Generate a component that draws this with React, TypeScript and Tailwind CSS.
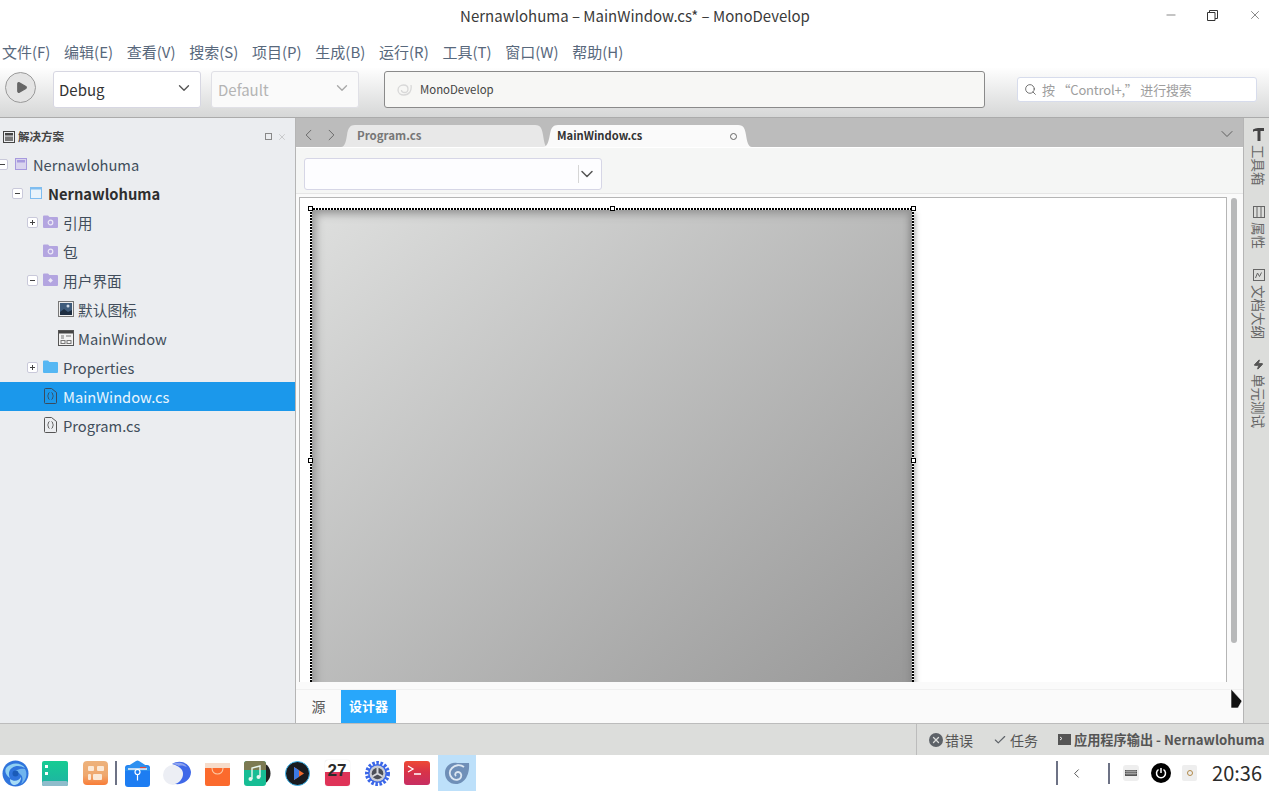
import React from "react";
import { ChevronDown, ChevronLeft, ChevronRight, Search, Minus, X, Check, Play, Zap } from "lucide-react";

const menus = ["文件(F)", "编辑(E)", "查看(V)", "搜索(S)", "项目(P)", "生成(B)", "运行(R)", "工具(T)", "窗口(W)", "帮助(H)"];

function Expander({ open }: { open: boolean }) {
  return (
    <span className="w-[11px] h-[11px] bg-white border border-[#c9c9da] rounded-[2px] flex items-center justify-center shrink-0">
      <svg width="7" height="7" viewBox="0 0 7 7"><path d={open ? "M1 3.5h5" : "M1 3.5h5M3.5 1v5"} stroke="#444" strokeWidth="1" /></svg>
    </span>
  );
}

function Folder({ dot, color = "#b3a5e0" }: { dot?: "o" | "d"; color?: string }) {
  return (
    <svg width="15" height="13" viewBox="0 0 15 13" className="shrink-0 -mt-[2px]">
      <path d="M0 1.5A1 1 0 0 1 1 .5h4l1.5 1.5H14a1 1 0 0 1 1 1V12a1 1 0 0 1-1 1H1a1 1 0 0 1-1-1z" fill={color} />
      {dot === "o" && <circle cx="7.5" cy="7.5" r="2.3" fill="none" stroke="#ebe8f7" strokeWidth="1.2" />}
      {dot === "d" && <path d="M7.5 5l2.4 2.4-2.4 2.4-2.4-2.4z" fill="#ebe8f7" />}
    </svg>
  );
}

function CsFile({ light }: { light?: boolean }) {
  const c = light ? "#3b4a5c" : "#555";
  return (
    <svg width="13" height="16" viewBox="0 0 13 16" className="shrink-0 -mt-[2px]">
      <path d="M.5 1.5a1 1 0 0 1 1-1h6l5 4v10a1 1 0 0 1-1 1h-10a1 1 0 0 1-1-1z" fill="none" stroke={c} />
      <path d="M5.500 4.500c-1.500 0-.8 3-2 3.500 1.200.5.5 3.500 2 3.500M7.500 4.500c1.500 0 .8 3 2 3.500-1.200.5-.5 3.500-2 3.500" fill="none" stroke={c} strokeWidth=".9" />
    </svg>
  );
}

function Row({ indent, exp, icon, label, bold, selected }: { indent: number; exp?: boolean; icon: React.ReactNode; label: string; bold?: boolean; selected?: boolean }) {
  return (
    <div className={`h-[29px] flex items-center shrink-0 ${selected ? "bg-[#1b98eb] text-[#e8f5fe]" : "text-[#414d5b]"}`}>
      <div className="shrink-0 flex justify-end" style={{ width: indent }}>{exp !== undefined && <Expander open={exp} />}</div>
      <div className="w-[25px] flex justify-center shrink-0">{icon}</div>
      <span className={`text-[14.700px] leading-none pt-[2px] ${bold ? "font-bold text-[#2e2e2e]" : ""}`}>{label}</span>
    </div>
  );
}

function SideTab({ icon, label }: { icon: React.ReactNode; label: string }) {
  return (
    <div className="flex flex-col items-center gap-[4px]">
      {icon}
      <span className="[writing-mode:vertical-rl] [text-orientation:sideways] text-[13.500px] leading-none text-[#666]">{label}</span>
    </div>
  );
}

function Handle({ className }: { className: string }) {
  return <span className={`absolute w-[5px] h-[5px] bg-white border border-black ${className}`} />;
}

function DockIcons() {
  return (
    <div className="flex items-center h-full -ml-[5px]">
      <div className="w-[40px] flex justify-center">
        <svg width="27" height="27" viewBox="0 0 27 27">
          <circle cx="13.500" cy="13.500" r="13" fill="#2f74dc" />
          <path d="M4 8c5-6 15-6 19 0-4-2-9-3-13 0-3 2-4 6-2 10-3-2-6-6-4-10z" fill="#8fd0f3" />
          <path d="M23 9c3 5 1 12-4 15 2-3 2-7 0-9-2-3-5-3-8-2 2-3 8-5 12-4z" fill="#6fb4ee" />
          <path d="M8 19c4 3 9 2 11-2 0 4-2 7-6 8-3 0-5-2-5-6z" fill="#a8dcf6" />
          <circle cx="13.500" cy="13.500" r="3" fill="#1a5bb8" />
        </svg>
      </div>
      <div className="w-[40px] flex justify-center">
        <svg width="26" height="25" viewBox="0 0 26 25">
          <defs><linearGradient id="gf" x1="0" y1="0" x2="0" y2="1"><stop offset="0" stopColor="#16cc92" /><stop offset="1" stopColor="#1fb2a4" /></linearGradient></defs>
          <rect width="26" height="25" rx="2" fill="url(#gf)" />
          <rect y="20" width="26" height="5" rx="2" fill="#8fbccb" />
          <rect x="3" y="4" width="3" height="3" fill="#fff" />
          <rect x="3" y="11" width="3" height="3" fill="#fff" />
        </svg>
      </div>
      <div className="w-[40px] flex justify-center">
        <svg width="25" height="24" viewBox="0 0 25 24">
          <defs><linearGradient id="ga" x1="0" y1="0" x2="0" y2="1"><stop offset="0" stopColor="#edb27c" /><stop offset=".6" stopColor="#efa86e" /><stop offset="1" stopColor="#f97c36" /></linearGradient></defs>
          <rect width="25" height="24" rx="4" fill="url(#ga)" />
          <rect x="5" y="5" width="6" height="5" rx="1" fill="#fbe9d7" />
          <rect x="14" y="5" width="7" height="5" rx="1" fill="#fbe9d7" />
          <rect x="5" y="13" width="3" height="6" rx="1" fill="#fbe9d7" />
          <rect x="10" y="13" width="9" height="6" rx="1" fill="#fbe9d7" />
        </svg>
      </div>
      <div className="w-[2px] h-[24px] bg-[#6d7285]" />
      <div className="w-[40px] flex justify-center">
        <svg width="25" height="27" viewBox="0 0 25 27">
          <rect y="5" width="25" height="22" rx="3" fill="#1d7df2" />
          <path d="M0 8L11 1q1.500-1 3 0l11 7v3H0z" fill="#2b8ff0" />
          <path d="M3 9h19" stroke="#f3f5f8" strokeWidth="1.500" />
          <path d="M15 7.500h6" stroke="#e0483d" strokeWidth="1.200" />
          <circle cx="12.500" cy="12" r="2.500" fill="none" stroke="#fff" strokeWidth="1.200" />
          <path d="M12.500 14.500v6" stroke="#fff" strokeWidth="1.200" />
        </svg>
      </div>
      <div className="w-[40px] flex justify-center">
        <svg width="28" height="24" viewBox="0 0 28 24">
          <circle cx="10" cy="14" r="10" fill="#eceef4" />
          <path d="M9 3c8-5 18-1 19 8 0 8-8 13-16 12 4-1 8-5 8-10S16 5 9 3z" fill="#3f68e8" />
          <path d="M9 3c5-2 12-2 15 3-3-1-6-2-8-1-2-1-4-2-7-2z" fill="#8ea3ee" />
        </svg>
      </div>
      <div className="w-[40px] flex justify-center">
        <svg width="25" height="25" viewBox="0 0 25 25">
          <path d="M0 3h25v20a2 2 0 0 1-2 2H2a2 2 0 0 1-2-2z" fill="#fb6a2d" />
          <path d="M0 2h25v5H0z" fill="#f6dccb" />
          <path d="M7 7c0 8 11 8 11 0" fill="none" stroke="#fbc9a5" strokeWidth="1.100" />
        </svg>
      </div>
      <div className="w-[40px] flex justify-center">
        <svg width="27" height="25" viewBox="0 0 27 25">
          <circle cx="15" cy="12.500" r="11.500" fill="#222" />
          <rect width="22" height="25" rx="3" fill="#16bd94" />
          <path d="M0 3a3 3 0 0 1 3-3h16a3 3 0 0 1 3 3v6H0z" fill="#7c7a52" />
          <path d="M8 18V7l8-2v11" fill="none" stroke="#e8f6ef" strokeWidth="1.400" />
          <circle cx="6.500" cy="18" r="2" fill="#e8f6ef" />
          <circle cx="14.500" cy="16" r="2" fill="#e8f6ef" />
        </svg>
      </div>
      <div className="w-[40px] flex justify-center">
        <svg width="25" height="25" viewBox="0 0 25 25">
          <circle cx="12.500" cy="12.500" r="12" fill="#191b20" stroke="#3fb6ee" strokeWidth="1" />
          <path d="M9 6l10 6.500L9 19z" fill="#f0692d" />
          <path d="M9 6l5 3.300v6.400L9 19z" fill="#3b79e6" />
        </svg>
      </div>
      <div className="w-[40px] flex justify-center">
        <div className="w-[25px] h-[26px] rounded-[3px] bg-white shadow-[0_0_1px_#ccc] flex flex-col overflow-hidden relative">
          <div className="h-[12px]" />
          <div className="flex-1 bg-[#df3358]" />
          <span className="absolute inset-0 flex items-center justify-center pb-[5px] text-[17px] font-bold text-[#2b2b2b] font-['Liberation_Sans',sans-serif]">27</span>
        </div>
      </div>
      <div className="w-[40px] flex justify-center">
        <svg width="25" height="25" viewBox="0 0 25 25">
          <circle cx="12.500" cy="12.500" r="10.500" fill="none" stroke="#3a66e8" strokeWidth="4" strokeDasharray="2.500 1.500" />
          <circle cx="12.500" cy="12.500" r="9.500" fill="#3a66e8" />
          <circle cx="12.500" cy="12.500" r="8" fill="#c9ccd4" />
          <circle cx="12.500" cy="12.500" r="5.800" fill="#4b4f58" />
          <path d="M12.500 12.500V6.500M12.500 12.500l-5.200 3M12.500 12.500l5.200 3" stroke="#d5d7dc" strokeWidth="2" />
        </svg>
      </div>
      <div className="w-[40px] flex justify-center">
        <svg width="26" height="24" viewBox="0 0 26 24">
          <defs><linearGradient id="gt" x1="0" y1="0" x2="0" y2="1"><stop offset="0" stopColor="#ee4a35" /><stop offset=".45" stopColor="#d83348" /><stop offset="1" stopColor="#c72e63" /></linearGradient></defs>
          <rect width="26" height="24" rx="3" fill="url(#gt)" />
          <path d="M4 5l5 3-5 3M10 13h7" fill="none" stroke="#fff" strokeWidth="1.300" />
        </svg>
      </div>
      <div className="w-[38px] ml-[1px] h-full bg-[#bde0fa] flex items-center justify-center">
        <svg width="26" height="24" viewBox="0 0 26 24">
          <path d="M25 2c1 11-4 21-13 21C5 23 1 18 1 12S6 1 13 2c4 0 8 0 12 0z" fill="#6f8fb8" />
          <path d="M20 6c-4-3-9-2-12 1S5 14 8 17s8 2 9-1-1-5-3-5-4 2-2 4" fill="none" stroke="#dde7f2" strokeWidth="1.800" />
        </svg>
      </div>
    </div>
  );
}

export default function App() {
  return (
    <div className="w-[1269px] h-[791px] overflow-hidden flex flex-col bg-white font-['Noto_Sans_CJK_SC','Noto_Sans',sans-serif] relative">
      {/* title bar */}
      <div className="h-[30px] shrink-0 flex items-center relative bg-white">
        <div className="flex-1 text-center text-[15px] leading-none text-[#3a3a3a] pl-[1px]">Nernawlohuma – MainWindow.cs* – MonoDevelop</div>
        <div className="absolute right-0 top-0 h-[30px] flex items-center">
          <div className="w-[24px] flex justify-center text-[#333]"><Minus size={14} strokeWidth={1} /></div>
          <div className="w-[58px] flex justify-center">
            <svg width="11" height="11" viewBox="0 0 11 11"><path d="M.5 2.500h7.500v8H.5zM2.500 2.500V.5h8v8H8" fill="none" stroke="#333" /></svg>
          </div>
          <div className="w-[28px] flex justify-center text-[#333]"><X size={14} strokeWidth={1} /></div>
        </div>
      </div>
      {/* menu */}
      <div className="h-[38px] shrink-0 flex items-center pl-[2px] gap-[13.700px] text-[15px] leading-none text-[#58687c] pt-[4px]">
        {menus.map((m) => <span key={m}>{m}</span>)}
      </div>
      {/* toolbar */}
      <div className="h-[50px] shrink-0 bg-gradient-to-b from-[#fefefe] to-[#d6d7d7] border-b border-b-[#ababab] flex items-start pl-[5px] pt-[3px]">
        <div className="w-[31px] h-[31px] mt-[1px] rounded-full border border-[#9a9a9a] bg-[#e4e4e4] flex items-center justify-center">
          <Play size={13} className="text-[#666] fill-[#666] ml-[1px]" />
        </div>
        <div className="w-[148px] h-[37px] ml-[17px] rounded-[3px] bg-white border border-[#d7d7e2] flex items-center justify-between pl-[5px] pr-[7px]">
          <span className="text-[15px] leading-none text-[#333]">Debug</span>
          <ChevronDown size={18} strokeWidth={1.800} className="text-[#555] -mt-[3px]" />
        </div>
        <div className="w-[148px] h-[37px] ml-[10px] rounded-[3px] bg-[#fafafa] border border-[#e0e0e6] flex items-center justify-between pl-[6px] pr-[7px]">
          <span className="text-[15px] leading-none text-[#b4b4b4]">Default</span>
          <ChevronDown size={18} strokeWidth={1.800} className="text-[#a9a9a9] -mt-[3px]" />
        </div>
        <div className="w-[601px] h-[37px] ml-[25px] rounded-[3px] bg-[#f7f7f5] border border-[#8a8a8a] flex items-center pl-[11px]">
          <svg width="16" height="12" viewBox="0 0 16 12"><path d="M15 1c1 6-2 10-7 10-3.500 0-6-2-6-5s2.500-5 5.500-5 4.500 2 4.500 4-1.500 3.500-3.500 3.500-3-1-3-2.500" fill="none" stroke="#d8d8d8" strokeWidth="1.300" /></svg>
          <span className="ml-[8px] text-[11.400px] leading-none text-[#444]">MonoDevelop</span>
        </div>
        <div className="w-[240px] h-[25px] ml-[32px] mt-[6px] rounded-[3px] bg-white border border-[#d7dcec] flex items-center pl-[6px]">
          <Search size={13} strokeWidth={1.500} className="text-[#555]" />
          <span className="ml-[5px] text-[13px] tracking-[-0.2px] leading-none text-[#9e9e9e] -mt-[1px]">按 “Control+,” 进行搜索</span>
        </div>
      </div>
      {/* main */}
      <div className="flex-1 flex min-h-0">
        {/* sidebar */}
        <div className="w-[296px] shrink-0 bg-[#ebedf0] border-r border-r-[#b5b5b5] flex flex-col">
          <div className="h-[33px] shrink-0 flex items-center pl-[3px] pr-[8px] pt-[4px]">
            <svg width="12" height="12" viewBox="0 0 12 12"><rect x=".5" y=".5" width="11" height="11" fill="none" stroke="#444" /><rect x="2" y="2" width="8" height="2.500" fill="#444" /><rect x="2" y="5.500" width="8" height="4.500" fill="#777" /></svg>
            <span className="ml-[3px] text-[11.500px] leading-none font-bold text-[#444]">解决方案</span>
            <div className="flex-1" />
            <span className="w-[7px] h-[7px] border border-[#888]" />
            <X size={10} className="ml-[5px] text-[#999]" strokeWidth={1} />
          </div>
          <div className="flex flex-col -mt-[1px]">
            <Row indent={8} exp={true} label="Nernawlohuma" icon={
              <svg width="12" height="12" viewBox="0 0 12 12" className="-mt-[2px]"><rect x=".5" y=".5" width="11" height="11" fill="#d9d4ee" stroke="#a79ade" /><rect x="2" y="2" width="8" height="2.500" fill="#a79ade" /></svg>
            } />
            <Row indent={23} exp={true} bold label="Nernawlohuma" icon={
              <svg width="12" height="12" viewBox="0 0 12 12" className="-mt-[2px]"><rect x=".5" y=".5" width="11" height="11" fill="#e8f3fb" stroke="#7fbdf0" /><rect x="1" y="1" width="10" height="1.500" fill="#7fbdf0" /></svg>
            } />
            <Row indent={38} exp={false} label="引用" icon={<Folder dot="o" />} />
            <Row indent={38} label="包" icon={<Folder dot="o" />} />
            <Row indent={38} exp={true} label="用户界面" icon={<Folder dot="d" />} />
            <Row indent={53} label="默认图标" icon={
              <svg width="16" height="16" viewBox="0 0 16 16" className="-mt-[2px]"><rect x=".5" y=".5" width="15" height="15" fill="#eee" stroke="#777" /><rect x="2" y="2" width="12" height="12" fill="#3f5c7c" /><path d="M2 11l4-3 4 3 4-2v5H2z" fill="#1c2c40" /><circle cx="10" cy="5" r="1.500" fill="#cfd9e6" /></svg>
            } />
            <Row indent={53} label="MainWindow" icon={
              <svg width="16" height="16" viewBox="0 0 16 16" className="-mt-[2px]"><rect x=".5" y=".5" width="15" height="15" fill="#f2f2f2" stroke="#555" /><rect x="1" y="1" width="14" height="2.500" fill="#444" /><path d="M3 6h3M3 8h3M8 6h5" stroke="#777" /><rect x="3" y="10.500" width="4" height="3" fill="none" stroke="#777" /><rect x="9" y="10.500" width="4" height="3" fill="none" stroke="#777" /></svg>
            } />
            <Row indent={38} exp={false} label="Properties" icon={<Folder color="#55b7f3" />} />
            <Row indent={38} selected label="MainWindow.cs" icon={<CsFile light />} />
            <Row indent={38} label="Program.cs" icon={<CsFile />} />
          </div>
        </div>
        {/* centre */}
        <div className="w-[947px] shrink-0 flex flex-col bg-[#fafafa]">
          <div className="h-[29px] shrink-0 bg-[#bcbcbc] flex items-end">
            <div className="w-[45px] h-full flex items-center pl-[3px] gap-[4px] pt-[4px] text-[#555]">
              <ChevronLeft size={20} strokeWidth={1} />
              <ChevronRight size={20} strokeWidth={1} />
            </div>
            <div className="w-[206px] h-[22px] bg-[#e8e8e8] [clip-path:path('M0_22C4_22_5_16_6_10C7_3_9_0_14_0L194_0C200_0_201_4_202_10C203_16_204_22_206_22Z')] flex items-center pl-[16px]">
              <span className="text-[11.500px] font-bold leading-none text-[#777]">Program.cs</span>
            </div>
            <div className="w-[209px] h-[22px] -ml-[4px] bg-[#fafafa] [clip-path:path('M0_22C5_22_6_14_7_9C8_3_10_0_15_0L195_0C201_0_202_4_203_10C204_16_205_22_209_22Z')] flex items-center pl-[14px] justify-between pr-[15px]">
              <span className="text-[11.200px] font-bold leading-none text-[#333]">MainWindow.cs</span>
              <span className="w-[7px] h-[7px] rounded-full border border-[#666]" />
            </div>
            <div className="flex-1" />
            <ChevronDown size={20} strokeWidth={1.100} className="text-[#555] mb-[3px] mr-[6px]" />
          </div>
          <div className="h-[47px] shrink-0 bg-[#f5f6f5] border-t border-t-white border-b border-b-[#e6e6e6] flex items-center pl-[8px] pt-[6px]">
            <div className="w-[298px] h-[32px] bg-[#fdfdff] border border-[#d6d6e6] rounded-[3px] flex items-center justify-end">
              <div className="w-[1px] h-[18px] bg-[#d6d6d6]" />
              <ChevronDown size={20} strokeWidth={1.800} className="text-[#555] -ml-[2px] mr-[4px]" />
            </div>
          </div>
          <div className="flex-1 min-h-0 flex pt-[3px] pl-[3px]">
            <div className="flex-1 min-w-0 h-[485px] bg-white border-t border-l border-r border-[#b5b5b5] overflow-hidden pl-[10px] pt-[10px]">
              <div className="w-[604px] h-[510px] relative p-[2px]">
                <div className="w-full h-full bg-gradient-to-br from-[#dedfde] to-[#969696] shadow-[inset_8px_8px_8px_-4px_#969696,inset_-6px_0_6px_-3px_#8a8a8a,6px_0_5px_-2px_#bbbbbb]" />
                <div className="absolute left-0 right-0 top-0 h-[2px] bg-[repeating-linear-gradient(90deg,#000_0_2px,#fff_2px_3px)]" />
                <div className="absolute left-0 top-0 bottom-0 w-[2px] bg-[repeating-linear-gradient(0deg,#000_0_2px,#fff_2px_3px)]" />
                <div className="absolute right-0 top-0 bottom-0 w-[2px] bg-[repeating-linear-gradient(0deg,#000_0_2px,#fff_2px_3px)]" />
              </div>
            </div>
            <div className="w-[16px] shrink-0 flex pl-[4px]">
              <div className="w-[6px] h-[445px] mt-[1px] rounded-full bg-[#b7b8b9]" />
            </div>
          </div>
          <div className="h-[34px] shrink-0 border-t border-t-[#f0f0f0] flex">
            <div className="w-[45px] flex items-center justify-center pb-[2px] text-[14px] leading-none text-[#555]">源</div>
            <div className="w-[55px] bg-[#28a7fb] flex items-center justify-center pb-[2px] text-[13px] font-bold leading-none text-white">设计器</div>
          </div>
        </div>
        {/* right rail */}
        <div className="flex-1 bg-[#dcdddb] border-l border-l-[#b5b5b5] flex flex-col items-center pt-[10px] gap-[20px] pl-[4px]">
          <SideTab label="工具箱" icon={<svg width="11" height="13" viewBox="0 0 11 13"><path d="M0 1.500Q2 0 5 0h6v3H7.500v10h-3V3H2Q1 3 0 4z" fill="#444" /></svg>} />
          <SideTab label="属性" icon={<svg width="12" height="12" viewBox="0 0 12 12"><rect x=".5" y=".5" width="11" height="11" fill="none" stroke="#666" /><path d="M4 1v10M8 1v10" stroke="#666" /></svg>} />
          <SideTab label="文档大纲" icon={<svg width="12" height="12" viewBox="0 0 12 12"><rect x=".5" y=".5" width="11" height="11" fill="none" stroke="#666" /><path d="M2.500 9l2-5 2 3.500 2-4" fill="none" stroke="#666" /></svg>} />
          <SideTab label="单元测试" icon={<Zap size={11} className="text-[#555] fill-[#555]" />} />
        </div>
      </div>
      {/* status bar */}
      <div className="h-[32px] shrink-0 bg-[#dcdddb] border-t border-t-[#bcbcbc] flex justify-end">
        <div className="border-l border-l-[#bcbcbc] w-[353px] flex items-center pl-[12px] text-[14px] leading-none text-[#555] whitespace-nowrap">
          <span className="w-[14px] h-[14px] rounded-full bg-[#5d6268] flex items-center justify-center"><X size={10} strokeWidth={3} className="text-[#dcdddb]" /></span>
          <span className="ml-[2px]">错误</span>
          <Check size={14} strokeWidth={2} className="ml-[20px] text-[#5d6268]" />
          <span className="ml-[3px]">任务</span>
          <svg width="13" height="11" viewBox="0 0 13 11" className="ml-[20px]"><rect width="13" height="11" fill="#555" /><path d="M2 3l2 1.500-2 1.500" stroke="#eee" fill="none" /></svg>
          <span className="ml-[3px] font-bold text-[13.200px]">应用程序输出 - Nernawlohuma</span>
        </div>
      </div>
      {/* dock */}
      <div className="h-[36px] shrink-0 bg-white flex items-center">
        <DockIcons />
        <div className="flex-1" />
        <div className="w-[2px] h-[24px] bg-[#6d7285]" />
        <ChevronLeft size={15} strokeWidth={1.300} className="ml-[11px] text-[#333]" />
        <div className="w-[2px] h-[21px] bg-[#6d7285] ml-[24px]" />
        <div className="ml-[13px] w-[16px] h-[16px] rounded-[3px] bg-[#eee] flex items-center justify-center">
          <svg width="12" height="6" viewBox="0 0 12 6"><rect width="12" height="6" fill="#555" /><path d="M0 1.500h12M0 3.500h12M2 0v5M4 0v5M6 0v5M8 0v5M10 0v5" stroke="#ccc" strokeWidth=".5" /></svg>
        </div>
        <div className="ml-[12px] w-[20px] h-[20px] rounded-full bg-black flex items-center justify-center">
          <svg width="12" height="12" viewBox="0 0 12 12"><path d="M3.500 2.500a4.500 4.500 0 1 0 5 0M6 1v5" fill="none" stroke="#fff" strokeWidth="1.500" /></svg>
        </div>
        <div className="ml-[11px] w-[15px] h-[16px] rounded-[2px] bg-[#eee] flex items-center justify-center">
          <span className="w-[6px] h-[6px] rounded-full border border-[#b18a4a]" />
        </div>
        <span className="ml-[15px] mr-[7px] text-[20px] leading-none text-[#2b2b2b]">20:36</span>
      </div>
      {/* overlays: selection handles and pointer */}
      <Handle className="left-[308px] top-[206px]" />
      <Handle className="left-[610px] top-[206px]" />
      <Handle className="left-[911px] top-[206px]" />
      <Handle className="left-[308px] top-[458px]" />
      <Handle className="left-[911px] top-[458px]" />
      <svg width="13" height="20" viewBox="0 0 13 20" className="absolute left-[1230px] top-[689px]">
        <path d="M1 0l11 12-4 7H1z" fill="#111" stroke="#fff" strokeWidth=".6" />
      </svg>
    </div>
  );
}
